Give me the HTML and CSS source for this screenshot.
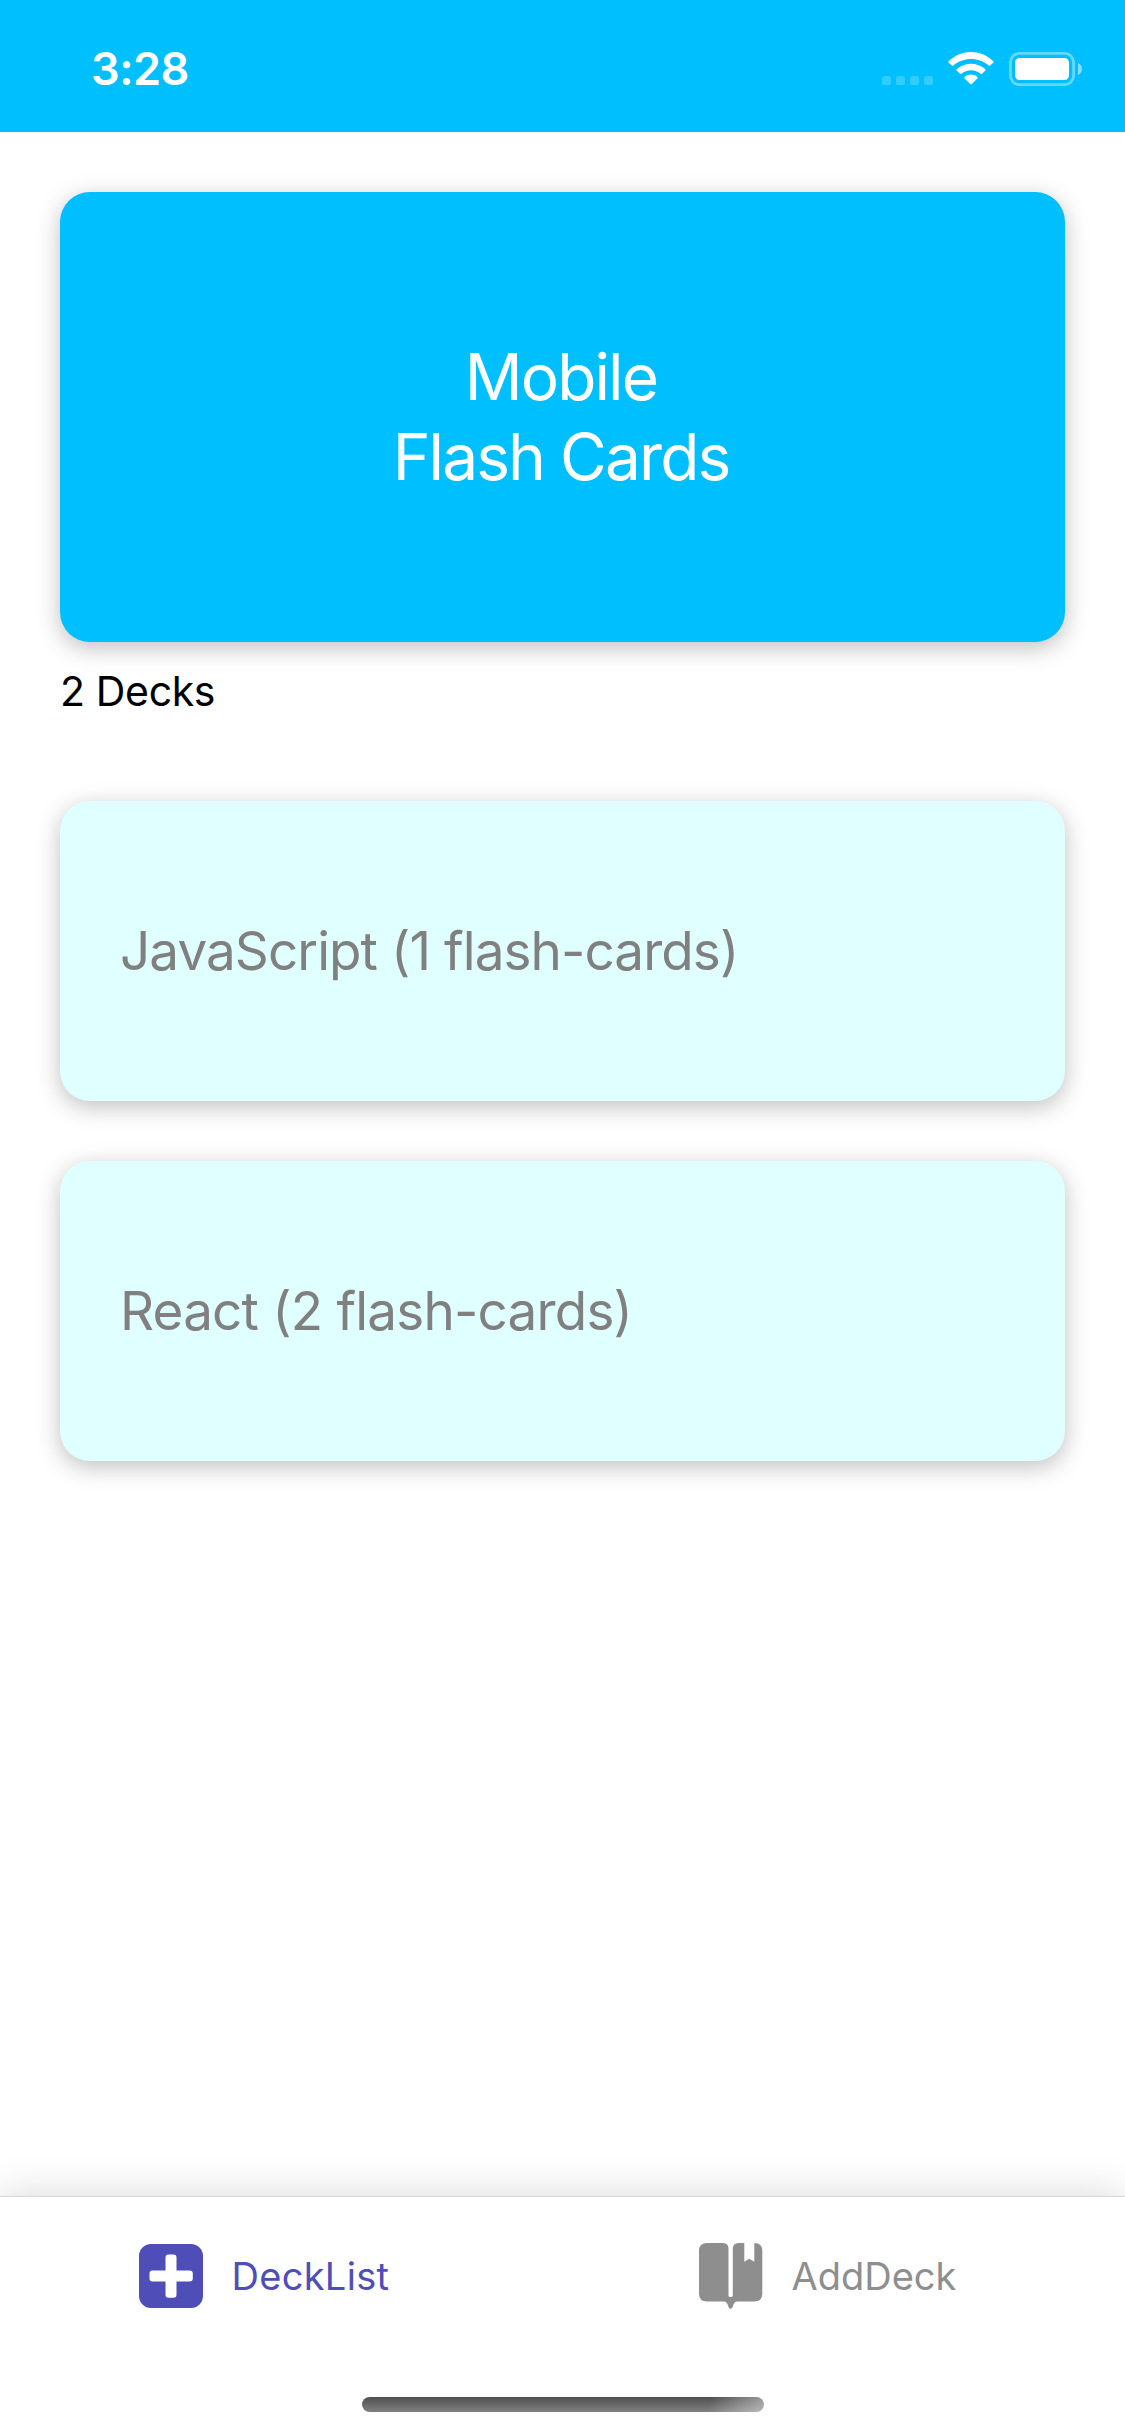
FILE: index.html
```html
<!DOCTYPE html>
<html lang="en">
<head>
<meta charset="utf-8">
<title>Mobile Flash Cards</title>
<link rel="stylesheet" href="styles.css">
</head>
<body>
<div class="app">
  <header class="status">
    <span class="time">3:28</span>
    <svg class="status-icons" width="201" height="36" viewBox="0 0 201 36" fill="#fff">
      <g opacity=".2">
        <rect x="0" y="25" width="9" height="9" rx="2.6"/>
        <rect x="14" y="25" width="9" height="9" rx="2.6"/>
        <rect x="28" y="25" width="9" height="9" rx="2.6"/>
        <rect x="42" y="25" width="9" height="9" rx="2.6"/>
      </g>
      <path d="M66.7 10.2 Q66 11 66.7 11.7 L69.9 14.6 Q70.6 15.2 71.3 14.6 C81 5.9 97 5.9 106.700 14.600 Q107.400 15.200 108.100 14.600 L111.300 11.700 Q112 11 111.300 10.200 C98.500 -2 79.500 -2 66.700 10.200Z"/>
      <path d="M74.600 18.200 Q73.900 18.900 74.600 19.600 L78 22.700 Q78.700 23.300 79.400 22.700 C84.900 18 93.100 18 98.600 22.700 Q99.300 23.300 100 22.700 L103.400 19.600 Q104.100 18.900 103.400 18.200 C95 10.800 83 10.800 74.600 18.200Z"/>
      <path d="M82.700 26 Q82 26.700 82.600 27.400 L88.300 33.100 Q89 33.700 89.700 33.100 L95.400 27.400 Q96 26.700 95.300 26 C91.700 22.800 86.300 22.800 82.700 26Z"/>
      <rect x="128.400" y="2.400" width="63.200" height="31.200" rx="9" fill="none" stroke="#fff" stroke-width="2.800" opacity=".4"/>
      <rect x="133" y="7" width="54" height="22" rx="4.500"/>
      <path d="M196 12 C201.300 14 201.300 22 196 24Z" opacity=".5"/>
    </svg>
  </header>
  <main class="content">
    <section class="card hero"><h1 class="title">Mobile<br>Flash Cards</h1></section>
    <p class="count">2 Decks</p>
    <section class="card deck">JavaScript (1 flash-cards)</section>
    <section class="card deck react">React (2 flash-cards)</section>
  </main>
  <nav class="tabs">
    <div class="tab-row">
      <a class="tab active">
        <svg width="64" height="66" viewBox="0 0 64 66"><path fill="currentColor" fill-rule="evenodd" d="M12 1H52A12 12 0 0 1 64 13V53A12 12 0 0 1 52 65H12A12 12 0 0 1 0 53V13A12 12 0 0 1 12 1ZM29.500 11.500Q26.500 11.500 26.500 14.500V27.500H13.500Q10.500 27.500 10.500 30.500V35.500Q10.500 38.500 13.500 38.500H26.500V51.500Q26.500 54.800 29.500 54.800H34.500Q37.500 54.800 37.500 51.500V38.500H50.500Q53.800 38.500 53.800 35.500V30.500Q53.800 27.500 50.500 27.500H37.500V14.500Q37.500 11.500 34.500 11.500Z"/></svg>
        <span class="label">DeckList</span>
      </a>
      <a class="tab">
        <svg width="64" height="66" viewBox="0 0 64 66"><path fill="currentColor" d="M8 0H24Q29.500 0 29.500 6V52.500Q29.500 54 31.500 54Q33.800 54 33.800 52.500V6Q33.800 0 39.500 0H45.300V18.700L50.300 15.800L55.300 18.700V0Q63.300 0 63.300 8V50.500Q63.300 58.500 55.300 58.500H39.500C35.500 58.500 34.600 60.500 33.700 64Q33.200 65.800 31.600 65.800Q30 65.800 29.500 64C28.600 60.500 27.700 58.500 23.700 58.500H8Q0 58.500 0 50.500V8Q0 0 8 0Z"/></svg>
        <span class="label">AddDeck</span>
      </a>
    </div>
    <div class="home"></div>
  </nav>
</div>
</body>
</html>
```
FILE: styles.css
```css
* { box-sizing: border-box; }
body { margin: 0; background: #fff; font-family: Inter, "Liberation Sans", sans-serif; }
.app { width: 1125px; height: 2436px; display: flex; flex-direction: column; overflow: hidden; }
.status { height: 132px; flex: none; background: #00bfff; color: #fff; display: flex; align-items: flex-start; justify-content: space-between; padding: 51px 42px 0 91px; }
.time { font-size: 45px; font-weight: 600; line-height: 36px; letter-spacing: -.5px; }
.status-icons { display: block; }
.content { flex: 1; padding: 60px; }
.card { border-radius: 30px; box-shadow: 0 6px 23px rgba(0, 0, 0, .25); display: flex; align-items: center; }
.hero { height: 450px; padding-right: 3px; background: #00bfff; color: #fff; justify-content: center; }
.title { margin: 0; font-size: 64px; line-height: 80px; font-weight: 400; text-align: center; letter-spacing: -1.9px; }
.count { margin: 24px 0 60px; font-size: 41px; line-height: 50px; height: 75px; color: #000; letter-spacing: -.35px; }
.deck { height: 300px; padding: 0 60px; margin-bottom: 60px; background: #e0ffff; color: #808080; font-size: 53px; letter-spacing: -.92px; white-space: nowrap; }
.react { letter-spacing: -.8px; }
.tabs { height: 240px; flex: none; background: #fff; border-top: 1px solid #d8d8d8; box-shadow: 0 0 40px rgba(0, 0, 0, .16); display: flex; flex-direction: column; align-items: center; padding-top: 46px; }
.tab-row { width: 100%; height: 154px; display: flex; }
.tab { width: 560px; flex: none; display: flex; align-items: flex-start; gap: 28.5px; padding-left: 139px; color: #8e8e8e; }
.active { color: #4f4db8; }
.label { font-size: 38px; line-height: 66px; }
.active .label { letter-spacing: .3px; }
.home { width: 402px; height: 15px; border-radius: 8px; background: linear-gradient(110deg, transparent 86%, rgba(255, 255, 255, .45) 100%), linear-gradient(#505050, #808080); }
```
